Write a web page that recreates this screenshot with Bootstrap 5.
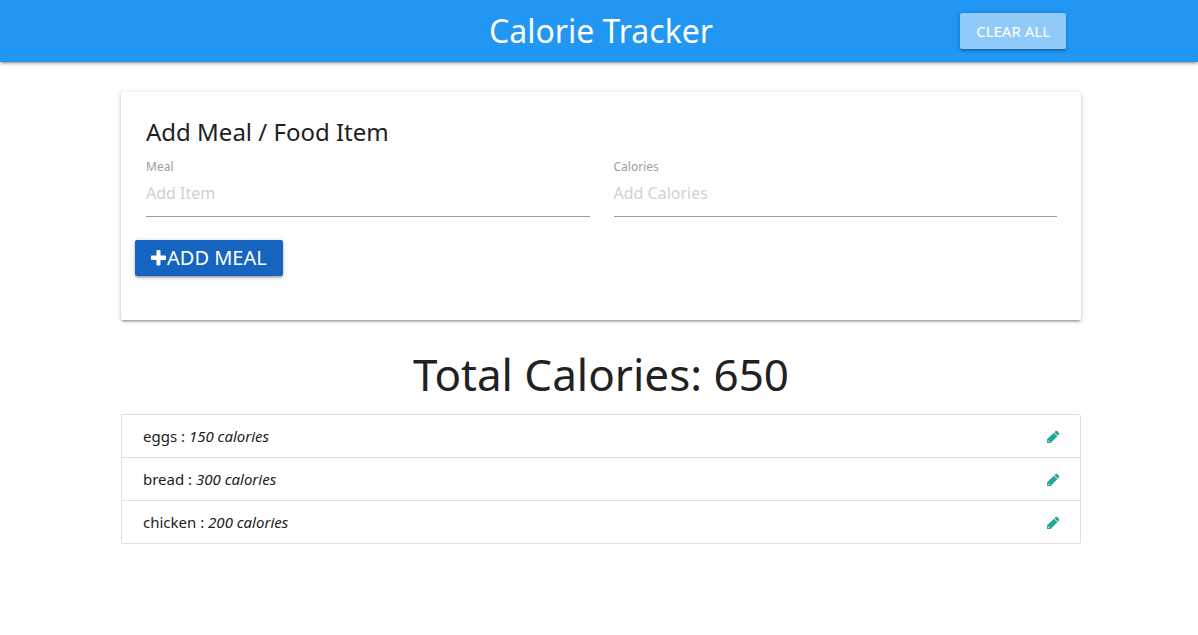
<!DOCTYPE html>
<html lang="en">
<head>
<meta charset="utf-8">
<meta name="viewport" content="width=device-width, initial-scale=1">
<title>Calorie Tracker</title>
<link href="https://cdn.jsdelivr.net/npm/bootstrap@5.3.0/dist/css/bootstrap.min.css" rel="stylesheet">
<style>
  :root {
    --raised: 0 2px 2px 0 rgba(0,0,0,.14), 0 3px 1px -2px rgba(0,0,0,.12), 0 1px 5px 0 rgba(0,0,0,.2);
  }
  body { font-family: "Noto Sans", sans-serif; font-size: 15px; line-height: 22px; color: #212121; background: #fff; }
  .page-width { padding-left: 121px; padding-right: 117px; }
  .app-bar { height: 62px; background: #2196f3; box-shadow: var(--raised); }
  .app-title { font-size: 32px; line-height: 62px; color: #fff; }
  .btn-raised { height: 36px; padding: 0 16px; border: 0; border-radius: 2px; color: #fff; line-height: 36px; box-shadow: var(--raised); }
  .btn-clear { background: #90caf9; font-size: 15px; margin-right: 15px; }
  .btn-add { background: #1565c0; font-size: 20px; }
  .btn-raised:hover, .btn-raised:active { color: #fff; background: #42a5f5; }
  .meal-card { margin-top: 30px; padding: 24px 24px 44px 25px; border: 0; border-radius: 2px; box-shadow: var(--raised); }
  .meal-title { font-size: 24px; line-height: 32px; margin: 0; }
  .field-label { font-size: 12px; line-height: 16px; color: #9e9e9e; margin-top: 11px; }
  .field-input { height: 42px; padding: 0 0 6px; border: 0; border-bottom: 1px solid #9e9e9e; border-radius: 0; font-size: 16px; }
  .field-input::placeholder { color: #d1d1d1; }
  .add-row { margin: 23px 0 0 -11px; }
  .total { font-size: 44px; line-height: 50px; margin: 29px 0 15px; }
  .meal-list { border: 1px solid #e0e0e0; border-radius: 2px; --bs-list-group-border-color: #e0e0e0; --bs-list-group-color: #212121; }
  .meal-item { height: 43px; padding: 0 20px 0 21px; border-radius: 0; }
  .meal-item:last-child { height: 42px; }
  .edit-link { color: #26a69a; line-height: 1; }
</style>
</head>
<body>
<nav class="app-bar page-width">
  <div class="position-relative d-flex align-items-center justify-content-end h-100">
    <a href="#" class="app-title position-absolute top-0 start-50 translate-middle-x text-decoration-none text-nowrap">Calorie Tracker</a>
    <button type="button" class="btn btn-raised btn-clear text-uppercase">Clear All</button>
  </div>
</nav>
<main class="page-width">
  <form class="card meal-card">
    <h1 class="meal-title fw-normal">Add Meal / Food Item</h1>
    <div class="row">
      <div class="col-6 d-flex flex-column">
        <label for="meal" class="field-label">Meal</label>
        <input id="meal" type="text" class="form-control field-input shadow-none" placeholder="Add Item">
      </div>
      <div class="col-6 d-flex flex-column">
        <label for="calories" class="field-label">Calories</label>
        <input id="calories" type="text" inputmode="numeric" class="form-control field-input shadow-none" placeholder="Add Calories">
      </div>
    </div>
    <div class="add-row d-flex">
      <button type="button" class="btn btn-raised btn-add d-inline-flex align-items-center text-uppercase"><svg width="16" height="16" viewBox="0 0 16 16" fill="currentColor" aria-hidden="true"><path d="M6.500 0h2a1 1 0 0 1 1 1v4.500h4.500a1 1 0 0 1 1 1v2.500a1 1 0 0 1-1 1h-4.500v4.500a1 1 0 0 1-1 1h-2a1 1 0 0 1-1-1v-4.500h-4.500a1 1 0 0 1-1-1v-2.500a1 1 0 0 1 1-1h4.500v-4.500a1 1 0 0 1 1-1z"/></svg>Add Meal</button>
    </div>
  </form>
  <h2 class="total fw-normal text-center">Total Calories: 650</h2>
  <ul class="list-group list-group-flush meal-list">
    <li class="list-group-item meal-item d-flex align-items-center justify-content-between"><span><span>eggs : </span><em>150 calories</em></span>
      <a href="#" class="edit-link" aria-label="Edit eggs"><svg width="14" height="14" viewBox="0 0 14 14" fill="currentColor" aria-hidden="true"><path d="M1 13v-3.700l6.900-6.500 3.500 3.500-6.700 6.700zM8.400 2.300l1.200-1.200q.9-.7 1.700 0l1.600 1.700q.7.800 0 1.600l-1.100 1.300z"/><path d="M2 10.500l1.500 1.500" stroke="#fff" stroke-width="1"/></svg></a></li>
    <li class="list-group-item meal-item d-flex align-items-center justify-content-between"><span><span>bread : </span><em>300 calories</em></span>
      <a href="#" class="edit-link" aria-label="Edit bread"><svg width="14" height="14" viewBox="0 0 14 14" fill="currentColor" aria-hidden="true"><path d="M1 13v-3.700l6.900-6.500 3.500 3.500-6.700 6.700zM8.400 2.300l1.200-1.200q.9-.7 1.700 0l1.600 1.700q.7.800 0 1.600l-1.100 1.300z"/><path d="M2 10.500l1.500 1.500" stroke="#fff" stroke-width="1"/></svg></a></li>
    <li class="list-group-item meal-item d-flex align-items-center justify-content-between"><span><span>chicken : </span><em>200 calories</em></span>
      <a href="#" class="edit-link" aria-label="Edit chicken"><svg width="14" height="14" viewBox="0 0 14 14" fill="currentColor" aria-hidden="true"><path d="M1 13v-3.700l6.900-6.500 3.500 3.500-6.700 6.700zM8.400 2.300l1.200-1.200q.9-.7 1.700 0l1.600 1.700q.7.800 0 1.600l-1.100 1.300z"/><path d="M2 10.500l1.500 1.500" stroke="#fff" stroke-width="1"/></svg></a></li>
  </ul>
</main>
<script src="https://cdn.jsdelivr.net/npm/bootstrap@5.3.0/dist/js/bootstrap.bundle.min.js"></script>
</body>
</html>
